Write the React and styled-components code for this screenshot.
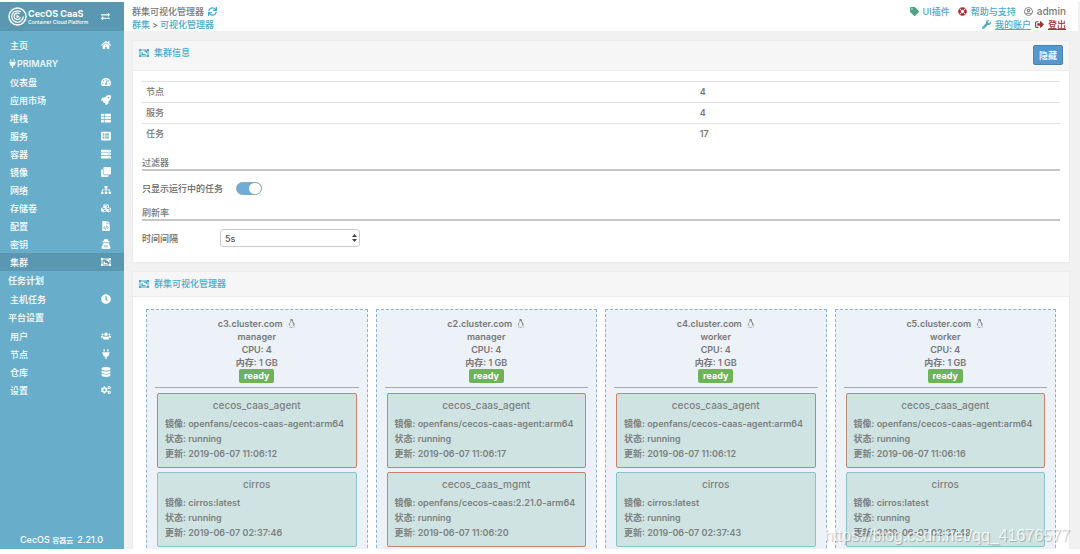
import { useState } from "react";
import styled, { createGlobalStyle } from "styled-components";
import {
  FaClock,
  FaClone,
  FaCogs,
  FaCubes,
  FaDatabase,
  FaExchangeAlt,
  FaFileCode,
  FaHome,
  FaLifeRing,
  FaLinux,
  FaListAlt,
  FaPlug,
  FaRegUserCircle,
  FaRocket,
  FaServer,
  FaSignOutAlt,
  FaSitemap,
  FaSync,
  FaTachometerAlt,
  FaTag,
  FaThList,
  FaUserSecret,
  FaUsers,
  FaWrench,
} from "react-icons/fa";

const GlobalStyle = createGlobalStyle`
  * {
    box-sizing: border-box;
  }

  body {
    margin: 0;
    background: #fff;
    color: #777;
    font-family: Inter, "Noto Sans CJK SC", sans-serif;
    font-size: 9px;
    font-weight: 500;
    line-height: 13px;
  }

  a {
    color: #4ba9c8;
    text-decoration: none;
  }
`;

const Page = styled.div`
  height: 100vh;
  padding: 2px 0 5px;
  display: flex;
  overflow: hidden;
  position: relative;
`;

const Sidebar = styled.aside`
  width: 124px;
  flex-shrink: 0;
  background: #68aeca;
  color: #fff;
  display: flex;
  flex-direction: column;
`;

const Brand = styled.div`
  height: 29px;
  padding: 0 14px 0 8px;
  background: #5a98b1;
  display: flex;
  align-items: center;
  justify-content: space-between;
`;

const Logo = styled.a`
  display: flex;
  align-items: center;
  gap: 1px;
  color: #fff;
`;

const LogoText = styled.span`
  display: flex;
  flex-direction: column;
`;

const LogoName = styled.span`
  font-size: 9px;
  font-weight: 700;
  line-height: 10px;
`;

const LogoTagline = styled.span`
  font-size: 5px;
  line-height: 6px;
  white-space: nowrap;
`;

const Collapse = styled.button`
  padding: 0;
  border: 0;
  background: none;
  color: #fff;
  font-size: 9px;
  display: flex;
`;

const Nav = styled.nav`
  padding-top: 5px;
  display: flex;
  flex-direction: column;
`;

const NavHeading = styled.div`
  height: 19px;
  padding-left: 8px;
  color: #e8f5fa;
  font-weight: 600;
  display: flex;
  align-items: center;
`;

const NavItem = styled.a`
  height: 18px;
  padding: 0 12px 0 10px;
  color: #fff;
  background: ${(props) => (props.$active ? "#5a98b1" : "transparent")};
  display: flex;
  align-items: center;
  justify-content: space-between;
`;

const NavIcon = styled.span`
  width: 12px;
  font-size: 10px;
  display: flex;
  justify-content: center;
`;

const SidebarFooter = styled.footer`
  margin-top: auto;
  padding: 0 20px 2px;
  display: flex;
  gap: 4px;
  white-space: nowrap;
`;

const ProductName = styled.span`
  font-size: 7px;
`;

const Main = styled.main`
  flex: 1;
  min-width: 0;
  background: #f1f1f1;
  display: flex;
  flex-direction: column;
`;

const Header = styled.header`
  height: 29px;
  flex-shrink: 0;
  margin-right: 2px;
  padding: 3px 12px 0 8px;
  background: #fff;
  display: flex;
  justify-content: space-between;
`;

const Line = styled.div`
  display: flex;
  align-items: center;
  justify-content: ${(props) => (props.$end ? "flex-end" : "flex-start")};
  gap: ${(props) => props.$gap || 4}px;
`;

const HeaderLink = styled.a`
  display: flex;
  align-items: center;
  gap: 4px;
  color: ${(props) => props.$color};
  text-decoration: ${(props) => (props.$underline ? "underline" : "none")};
`;

const Content = styled.div`
  padding: 9px 10px 0 8px;
  flex: 1;
  min-height: 0;
  display: flex;
  flex-direction: column;
  gap: 8px;
`;

const Panel = styled.section`
  background: #fff;
  border: 1px solid #ececec;
  border-bottom-width: ${(props) => (props.$grow ? 0 : 1)}px;
  flex: ${(props) => (props.$grow ? "1" : "none")};
  min-height: 0;
  overflow: hidden;
`;

const PanelHeader = styled.div`
  height: ${(props) => (props.$tall ? 30 : 25)}px;
  padding: 0 6px;
  background: #f6f6f6;
  border-bottom: 1px solid #ececec;
  display: flex;
  align-items: flex-start;
  justify-content: space-between;
`;

const PanelTitle = styled.h2`
  margin: 0;
  color: #4ba9c8;
  font-size: 9px;
  font-weight: 500;
  line-height: 24px;
  display: flex;
  align-items: center;
  gap: 5px;
`;

const HideButton = styled.button`
  height: 20px;
  margin-top: 4px;
  padding: 0 5px;
  border: 1px solid #4783b3;
  border-radius: 2px;
  background: #5598ce;
  color: #fff;
  font: inherit;
`;

const PanelBody = styled.div`
  padding: 10px 9px 6px;
`;

const Table = styled.table`
  width: 100%;
  margin-bottom: 11px;
  border-collapse: collapse;
  table-layout: fixed;

  th,
  td {
    height: 21px;
    border-top: 1px solid #e2e2e2;
    text-align: left;
  }

  th {
    width: 60%;
    padding: 0 4px 2px;
    font-weight: 500;
  }

  td {
    padding: 0 7px 2px;
    font-weight: 600;
  }
`;

const FormTitle = styled.h3`
  margin: 0;
  border-bottom: 2px solid #c6c6c6;
  font-size: 9px;
  font-weight: 500;
`;

const FormRow = styled.div`
  height: 35px;
  display: flex;
  align-items: center;
`;

const FormLabel = styled.label`
  width: ${(props) => (props.$wide ? 94 : 78)}px;
  color: #666;
`;

const Switch = styled.input`
  appearance: none;
  width: 26px;
  height: 13px;
  margin: 0;
  border: 1px solid #8aa;
  border-radius: 7px;
  background: ${(props) => (props.checked ? "#6fadd6" : "#ddd")};
  display: flex;
  justify-content: ${(props) => (props.checked ? "flex-end" : "flex-start")};

  &::before {
    content: "";
    width: 12px;
    height: 11px;
    border-radius: 6px;
    background: #fff;
  }
`;

const SelectBox = styled.div`
  position: relative;
  width: 140px;
`;

const Select = styled.select`
  appearance: none;
  display: block;
  width: 100%;
  height: 18px;
  padding: 0 4px;
  border: 1px solid #ccc;
  border-radius: 3px;
  background: #fff;
  color: #555;
  font: inherit;
`;

const SelectArrows = styled.svg`
  position: absolute;
  top: 5px;
  right: 3px;
  pointer-events: none;
`;

const Nodes = styled.div`
  padding: 12px 9px 0;
  display: grid;
  grid-template-columns: repeat(4, minmax(0, 1fr));
`;

const Node = styled.article`
  margin: 0 4px;
  padding: 7px 8px 40px;
  border: 1px dashed #8fb0d2;
  background: #edf1f8;
`;

const NodeInfo = styled.div`
  height: 71px;
  border-bottom: 1px solid #a2a9b8;
  font-weight: 600;
  display: flex;
  flex-direction: column;
  align-items: center;
`;

const Badge = styled.span`
  height: 14px;
  padding: 0 5px;
  border-radius: 2px;
  background: #6eb35b;
  color: #fff;
  font-weight: 700;
`;

const TaskList = styled.div`
  padding: 5px 2px 0;
  display: grid;
  gap: 4px;
`;

const Task = styled.div`
  height: 75px;
  padding: 5px 7px;
  border: 1px solid ${(props) => (props.$system ? "#c5856d" : "#8bc3c8")};
  border-radius: 2px;
  background: #cfe4e2;
  color: #7c8080;
  font-weight: 600;
  white-space: nowrap;
`;

const TaskName = styled.div`
  margin-bottom: 4px;
  font-size: 10px;
  font-weight: 500;
  text-align: center;
`;

const TaskLine = styled.div`
  height: 15px;
  line-height: 15px;
`;

const UserName = styled.span`
  font-size: 10px;
`;

const Watermark = styled.div`
  position: absolute;
  right: 10px;
  bottom: 9px;
  color: rgba(255, 255, 255, 0.8);
  font-family: "Liberation Sans", sans-serif;
  font-size: 16px;
  font-weight: 400;
  line-height: 18px;
  text-shadow: 1px 1px 1px rgba(0, 0, 0, 0.25);
`;

function GroupIcon() {
  return (
    <svg width="10" height="8" viewBox="0 0 20 16" fill="currentColor">
      <path d="M0 0h4v1h12V0h4v4h-1v8h1v4h-4v-1H4v1H0v-4h1V4H0zM3 4v8h1v1h12v-1h1V4h-1V3H4v1z" fillRule="evenodd" />
      <path d="M11 3h5v5h-2V6h-3zM5 7h3v3h5v2H5z" />
    </svg>
  );
}

const menu = [
  { label: "主页", icon: FaHome },
  { label: "PRIMARY", heading: true, icon: FaPlug },
  { label: "仪表盘", icon: FaTachometerAlt },
  { label: "应用市场", icon: FaRocket },
  { label: "堆栈", icon: FaThList },
  { label: "服务", icon: FaListAlt },
  { label: "容器", icon: FaServer },
  { label: "镜像", icon: FaClone },
  { label: "网络", icon: FaSitemap },
  { label: "存储卷", icon: FaCubes },
  { label: "配置", icon: FaFileCode },
  { label: "密钥", icon: FaUserSecret },
  { label: "集群", icon: GroupIcon, active: true },
  { label: "任务计划", heading: true },
  { label: "主机任务", icon: FaClock },
  { label: "平台设置", heading: true },
  { label: "用户", icon: FaUsers },
  { label: "节点", icon: FaPlug },
  { label: "仓库", icon: FaDatabase },
  { label: "设置", icon: FaCogs },
];

const stats = [
  ["节点", 4],
  ["服务", 4],
  ["任务", 17],
];

const agent = (updated) => ({
  name: "cecos_caas_agent",
  image: "openfans/cecos-caas-agent:arm64",
  updated,
  system: true,
});

const cirros = (updated) => ({
  name: "cirros",
  image: "cirros:latest",
  updated,
});

const nodes = [
  {
    name: "c3.cluster.com",
    role: "manager",
    tasks: [agent("2019-06-07 11:06:12"), cirros("2019-06-07 02:37:46")],
  },
  {
    name: "c2.cluster.com",
    role: "manager",
    tasks: [
      agent("2019-06-07 11:06:17"),
      {
        name: "cecos_caas_mgmt",
        image: "openfans/cecos-caas:2.21.0-arm64",
        updated: "2019-06-07 11:06:20",
        system: true,
      },
    ],
  },
  {
    name: "c4.cluster.com",
    role: "worker",
    tasks: [agent("2019-06-07 11:06:12"), cirros("2019-06-07 02:37:43")],
  },
  {
    name: "c5.cluster.com",
    role: "worker",
    tasks: [agent("2019-06-07 11:06:16"), cirros("2019-06-07 02:37:48")],
  },
];

function LogoMark() {
  return (
    <svg width="19" height="19" viewBox="0 0 38 38" fill="none" stroke="#fff">
      <circle cx="19" cy="19" r="17" strokeWidth="3" />
      <circle cx="19" cy="19" r="11.5" strokeWidth="2.5" strokeDasharray="60 12" />
      <path d="M23 13.500a6.500 6.500 0 1 0 2 7" strokeWidth="2.500" />
      <path d="M17 15l6 4-6 4z" fill="#fff" stroke="none" />
    </svg>
  );
}

function SidebarMenu() {
  return (
    <Sidebar>
      <Brand>
        <Logo href="#">
          <LogoMark />
          <LogoText>
            <LogoName>CecOS CaaS</LogoName>
            <LogoTagline>Container Cloud Platform</LogoTagline>
          </LogoText>
        </Logo>
        <Collapse aria-label="Toggle menu">
          <FaExchangeAlt />
        </Collapse>
      </Brand>
      <Nav>
        {menu.map(({ label, heading, active, icon: Icon }) =>
          heading ? (
            <NavHeading key={label}>
              {Icon && <Icon />}
              {label}
            </NavHeading>
          ) : (
            <NavItem key={label} href="#" $active={active}>
              {label}
              <NavIcon>
                <Icon />
              </NavIcon>
            </NavItem>
          )
        )}
      </Nav>
      <SidebarFooter>
        <span>
          CecOS <ProductName>容器云</ProductName>
        </span>
        <span>2.21.0</span>
      </SidebarFooter>
    </Sidebar>
  );
}

function TopBar() {
  return (
    <Header>
      <div>
        <Line>
          群集可视化管理器
          <HeaderLink href="#" aria-label="Refresh">
            <FaSync />
          </HeaderLink>
        </Line>
        <Line $gap={2}>
          <a href="#">群集</a> &gt; <a href="#">可视化管理器</a>
        </Line>
      </div>
      <div>
        <Line $end $gap={8}>
          <HeaderLink href="#">
            <FaTag color="#4fa183" /> UI插件
          </HeaderLink>
          <HeaderLink href="#">
            <FaLifeRing color="#a03030" /> 帮助与支持
          </HeaderLink>
          <HeaderLink as="span">
            <FaRegUserCircle /> <UserName>admin</UserName>
          </HeaderLink>
        </Line>
        <Line $end>
          <HeaderLink href="#" $underline>
            <FaWrench /> 我的账户
          </HeaderLink>
          <HeaderLink href="#" $underline $color="#9c3434">
            <FaSignOutAlt /> 登出
          </HeaderLink>
        </Line>
      </div>
    </Header>
  );
}

function NodeCard({ name, role, tasks }) {
  return (
    <Node>
      <NodeInfo>
        <Line>
          <span>{name}</span>
          <FaLinux />
        </Line>
        <span>{role}</span>
        <span>CPU: 4</span>
        <span>内存: 1 GB</span>
        <Badge>ready</Badge>
      </NodeInfo>
      <TaskList>
        {tasks.map((task) => (
          <Task key={task.name} $system={task.system}>
            <TaskName>{task.name}</TaskName>
            <TaskLine>镜像: {task.image}</TaskLine>
            <TaskLine>状态: running</TaskLine>
            <TaskLine>更新: {task.updated}</TaskLine>
          </Task>
        ))}
      </TaskList>
    </Node>
  );
}

function App() {
  const [runningOnly, setRunningOnly] = useState(true);

  return (
    <>
      <GlobalStyle />
      <Page>
        <SidebarMenu />
        <Main>
          <TopBar />
          <Content>
            <Panel>
              <PanelHeader $tall>
                <PanelTitle>
                  <GroupIcon /> 集群信息
                </PanelTitle>
                <HideButton>隐藏</HideButton>
              </PanelHeader>
              <PanelBody>
                <Table>
                  <tbody>
                    {stats.map(([label, value]) => (
                      <tr key={label}>
                        <th scope="row">{label}</th>
                        <td>{value}</td>
                      </tr>
                    ))}
                  </tbody>
                </Table>
                <FormTitle>过滤器</FormTitle>
                <FormRow>
                  <FormLabel $wide htmlFor="running-only">
                    只显示运行中的任务
                  </FormLabel>
                  <Switch
                    id="running-only"
                    type="checkbox"
                    checked={runningOnly}
                    onChange={(e) => setRunningOnly(e.target.checked)}
                  />
                </FormRow>
                <FormTitle>刷新率</FormTitle>
                <FormRow>
                  <FormLabel htmlFor="refresh-rate">时间间隔</FormLabel>
                  <SelectBox>
                    <Select id="refresh-rate" defaultValue="5">
                      <option value="5">5s</option>
                      <option value="10">10s</option>
                      <option value="30">30s</option>
                    </Select>
                    <SelectArrows width="5" height="8" viewBox="0 0 5 8">
                      <path d="M0 3l2.500-3L5 3zM0 5h5L2.500 8z" fill="#444" />
                    </SelectArrows>
                  </SelectBox>
                </FormRow>
              </PanelBody>
            </Panel>
            <Panel $grow>
              <PanelHeader>
                <PanelTitle>
                  <GroupIcon /> 群集可视化管理器
                </PanelTitle>
              </PanelHeader>
              <Nodes>
                {nodes.map((node) => (
                  <NodeCard key={node.name} {...node} />
                ))}
              </Nodes>
            </Panel>
          </Content>
        </Main>
        <Watermark>https://blog.csdn.net/qq_41676577</Watermark>
      </Page>
    </>
  );
}

export default App;
